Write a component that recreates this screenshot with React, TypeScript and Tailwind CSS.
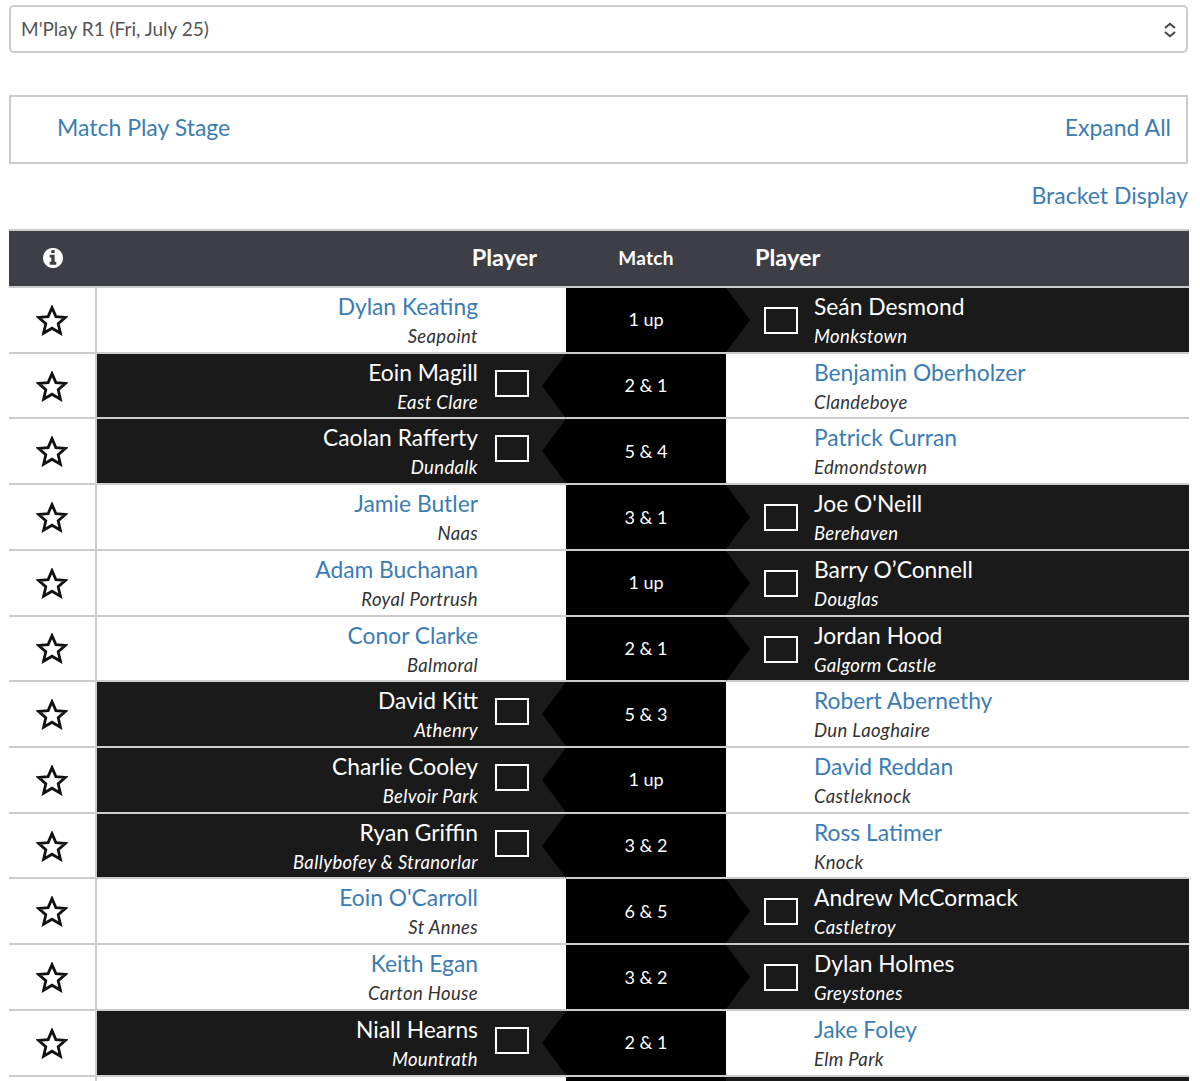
import React from "react";

type Match = { l: string; lc: string; s: string; r: string; rc: string; w: "l" | "r" };

const matches: Match[] = [
  { l: "Dylan Keating", lc: "Seapoint", s: "1 up", r: "Seán Desmond", rc: "Monkstown", w: "r" },
  { l: "Eoin Magill", lc: "East Clare", s: "2 & 1", r: "Benjamin Oberholzer", rc: "Clandeboye", w: "l" },
  { l: "Caolan Rafferty", lc: "Dundalk", s: "5 & 4", r: "Patrick Curran", rc: "Edmondstown", w: "l" },
  { l: "Jamie Butler", lc: "Naas", s: "3 & 1", r: "Joe O'Neill", rc: "Berehaven", w: "r" },
  { l: "Adam Buchanan", lc: "Royal Portrush", s: "1 up", r: "Barry O’Connell", rc: "Douglas", w: "r" },
  { l: "Conor Clarke", lc: "Balmoral", s: "2 & 1", r: "Jordan Hood", rc: "Galgorm Castle", w: "r" },
  { l: "David Kitt", lc: "Athenry", s: "5 & 3", r: "Robert Abernethy", rc: "Dun Laoghaire", w: "l" },
  { l: "Charlie Cooley", lc: "Belvoir Park", s: "1 up", r: "David Reddan", rc: "Castleknock", w: "l" },
  { l: "Ryan Griffin", lc: "Ballybofey & Stranorlar", s: "3 & 2", r: "Ross Latimer", rc: "Knock", w: "l" },
  { l: "Eoin O'Carroll", lc: "St Annes", s: "6 & 5", r: "Andrew McCormack", rc: "Castletroy", w: "r" },
  { l: "Keith Egan", lc: "Carton House", s: "3 & 2", r: "Dylan Holmes", rc: "Greystones", w: "r" },
  { l: "Niall Hearns", lc: "Mountrath", s: "2 & 1", r: "Jake Foley", rc: "Elm Park", w: "l" },
];

function Star() {
  return (
    <svg width="32" height="31" viewBox="0 0 32 31" fill="none">
      <polygon
        points="16,2.6 19.9,11.6 29.4,12.4 22.2,18.7 24.4,28.2 16,23.2 7.6,28.2 9.8,18.7 2.6,12.4 12.1,11.6"
        stroke="#111"
        strokeWidth="2.8"
        strokeLinejoin="miter"
      />
    </svg>
  );
}

function InfoIcon() {
  return (
    <svg width="20" height="20" viewBox="0 0 1536 1536" fill="#fff">
      <path d="M1024 1248v-160q0-14-9-23t-23-9h-96v-512q0-14-9-23t-23-9h-320q-14 0-23 9t-9 23v160q0 14 9 23t23 9h96v320h-96q-14 0-23 9t-9 23v160q0 14 9 23t23 9h448q14 0 23-9t9-23zm-128-896v-160q0-14-9-23t-23-9h-192q-14 0-23 9t-9 23v160q0 14 9 23t23 9h192q14 0 23-9t9-23zm640 416q0 209-103 385.5t-279.5 279.5-385.5 103-385.5-103-279.5-279.5-103-385.5 103-385.5 279.5-279.5 385.5-103 385.5 103 279.5 279.5 103 385.5z" />
    </svg>
  );
}

function Text({ name, club, won, right }: { name: string; club: string; won: boolean; right: boolean }) {
  return (
    <div className={right ? "text-right" : "text-left"}>
      <div className={`text-[22.8px] leading-[30px] mt-[3px] ${won ? "text-white" : "text-[#3b7cb5]"}`}>{name}</div>
      <div className={`text-[18.5px] leading-[24px] mt-[3px] italic tracking-[0.35px] ${won ? "text-white" : "text-[#333]"}`}>{club}</div>
    </div>
  );
}

function LeftPlayer({ name, club, won }: { name: string; club: string; won: boolean }) {
  return (
    <div className={`w-[469px] flex items-start justify-end ${won ? "bg-[#1a1a1a] pr-[37px]" : "bg-white pr-[88px]"}`}>
      <Text name={name} club={club} won={won} right />
      {won && <span className="mt-[16px] ml-[17px] w-[34px] h-[27px] border-2 border-white shrink-0" />}
    </div>
  );
}

function RightPlayer({ name, club, won }: { name: string; club: string; won: boolean }) {
  return (
    <div className={`flex-1 flex items-start ${won ? "bg-[#1a1a1a] pl-[38px]" : "bg-white pl-[88px]"}`}>
      {won && <span className="mt-[19px] mr-[16px] w-[34px] h-[27px] border-2 border-white shrink-0" />}
      <Text name={name} club={club} won={won} right={false} />
    </div>
  );
}

export default function App() {
  return (
    <div
      className="h-[1081px] overflow-hidden bg-white pl-[9px] pr-[11px] pt-[5px]"
      style={{ fontFamily: '"Lato", "Liberation Sans", sans-serif' }}
    >
      <div className="h-[48px] mr-[1px] border-2 border-[#ccc] rounded-[5px] flex items-center justify-between pl-[10px] pr-[9px] pt-[1px] text-[19px] text-[#555]">
        <span>M'Play R1 (Fri, July 25)</span>
        <svg width="14" height="16" viewBox="0 0 14 16" fill="none" stroke="#444" strokeWidth="2">
          <path d="M2 6 L7 1.8 L12 6" />
          <path d="M2 10 L7 14.2 L12 10" />
        </svg>
      </div>

      <div className="mt-[42px] h-[69px] mr-[1px] border-2 border-[#ccc] flex items-center justify-between pl-[46px] pr-[15px] pb-[4px] text-[23px] text-[#3b7cb5]">
        <span>Match Play Stage</span>
        <span>Expand All</span>
      </div>

      <div className="mt-[14px] h-[36px] mr-[1px] text-right text-[23px] leading-[34px] text-[#3b7cb5]">Bracket Display</div>

      <div className="mt-[15px]">
        <div className="h-[59px] flex items-center bg-[#3e3e46] border-y-2 border-[#ccc] text-white font-bold">
          <div className="w-[88px] flex justify-center -mt-[2px]">
            <InfoIcon />
          </div>
          <div className="w-[469px] text-right pr-[29px] pb-[2px] text-[23.5px]">Player</div>
          <div className="w-[160px] text-center pb-[1px] text-[19px] tracking-[0.3px]">Match</div>
          <div className="flex-1 pl-[29px] pb-[2px] text-[23.5px]">Player</div>
        </div>

        {matches.map((m) => (
          <div key={m.l} className="h-[65.73px] flex border-b-2 border-[#ccc]">
            <div className="w-[88px] flex items-center justify-center border-r-2 border-[#ccc] bg-white pt-[1px]">
              <Star />
            </div>
            <LeftPlayer name={m.l} club={m.lc} won={m.w === "l"} />
            <div className="relative w-[160px] bg-black text-white text-[18px] flex items-center justify-center">
              {m.s}
              {m.w === "l" ? (
                <span className="absolute right-full top-0 w-0 h-0 border-y-[32px] border-y-transparent border-r-[24px] border-r-black" />
              ) : (
                <span className="absolute left-full top-0 w-0 h-0 border-y-[32px] border-y-transparent border-l-[24px] border-l-black" />
              )}
            </div>
            <RightPlayer name={m.r} club={m.rc} won={m.w === "r"} />
          </div>
        ))}
        <div className="h-[65px] flex">
          <div className="w-[88px] border-r-2 border-[#ccc] bg-white" />
          <div className="w-[469px] bg-white" />
          <div className="w-[160px] bg-black" />
          <div className="flex-1 bg-[#1a1a1a]" />
        </div>
      </div>
    </div>
  );
}
